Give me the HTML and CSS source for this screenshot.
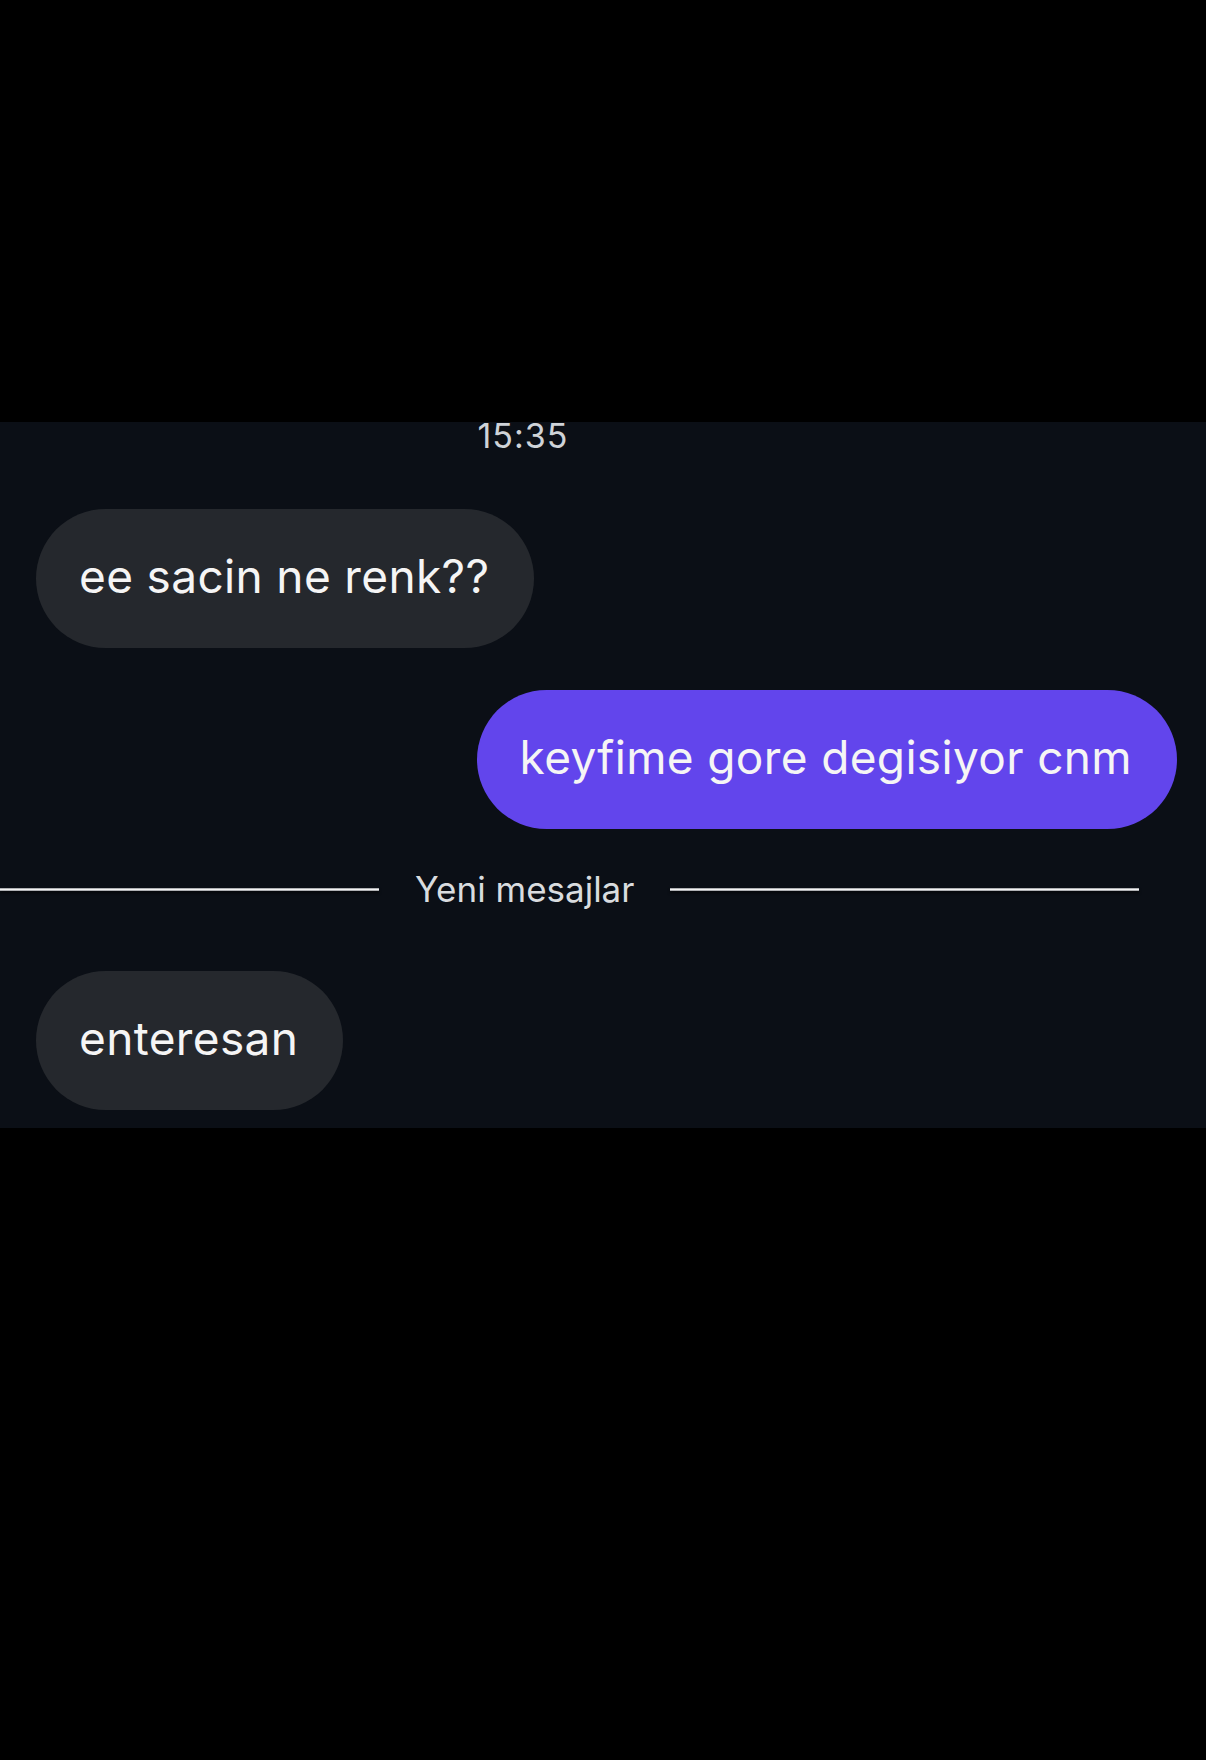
FILE: index.html
```html
<html>
  <head>
    <meta name="viewport" content="width=device-width, initial-scale=1" />
    <link rel="stylesheet" href="styles.css">
  </head>
  <body>
    <main class="chat">
      <div class="stamp">15:35</div>

      <div class="row in">
        <div class="bubble">ee sacin ne renk??</div>
      </div>

      <div class="row out">
        <div class="bubble mine">keyfime gore degisiyor cnm</div>
      </div>

      <div class="divider">
        <span class="line left"></span>
        <span class="label">Yeni mesajlar</span>
        <span class="line right"></span>
      </div>

      <div class="row in last">
        <div class="bubble">enteresan</div>
      </div>
    </main>
  </body>
</html>
```

FILE: styles.css
```css
body {
  margin: 0;
  background: #000;
  font-family: Inter, "Noto Sans", sans-serif;
}

.chat {
  display: flex;
  flex-direction: column;
  margin-top: 422px;
  height: 706px;
  box-sizing: border-box;
  background: #0b0f16;
}

.stamp {
  width: 1046px;
  text-align: center;
  font-size: 34px;
  line-height: 28px;
  letter-spacing: 1px;
  color: #cfd3d8;
}

.row {
  display: flex;
  padding: 0 29px 0 36px;
  margin-top: 59px;
}
.row.out {
  justify-content: flex-end;
  margin-top: 42px;
}
.row.last {
  margin-top: 62px;
}

.bubble {
  display: flex;
  align-items: center;
  height: 139px;
  box-sizing: border-box;
  padding: 0 45px 5px 43px;
  border-radius: 70px;
  background: #25282d;
  color: #f5f5f5;
  font-size: 46px;
  letter-spacing: 0.35px;
}
.bubble.mine {
  background: #6245ec;
}

.divider {
  display: flex;
  align-items: center;
  height: 40px;
  margin-top: 40px;
}
.divider .line {
  height: 3px;
  background: linear-gradient(#8e9094, #f2f2f2 50%, #8e9094);
  box-shadow: 0 2px 3px rgba(0, 0, 0, 0.6);
}
.divider .left {
  width: 379px;
}
.divider .right {
  width: 469px;
}
.divider .label {
  margin: 0 36px;
  font-size: 35px;
  color: #d9dcdf;
}
```
